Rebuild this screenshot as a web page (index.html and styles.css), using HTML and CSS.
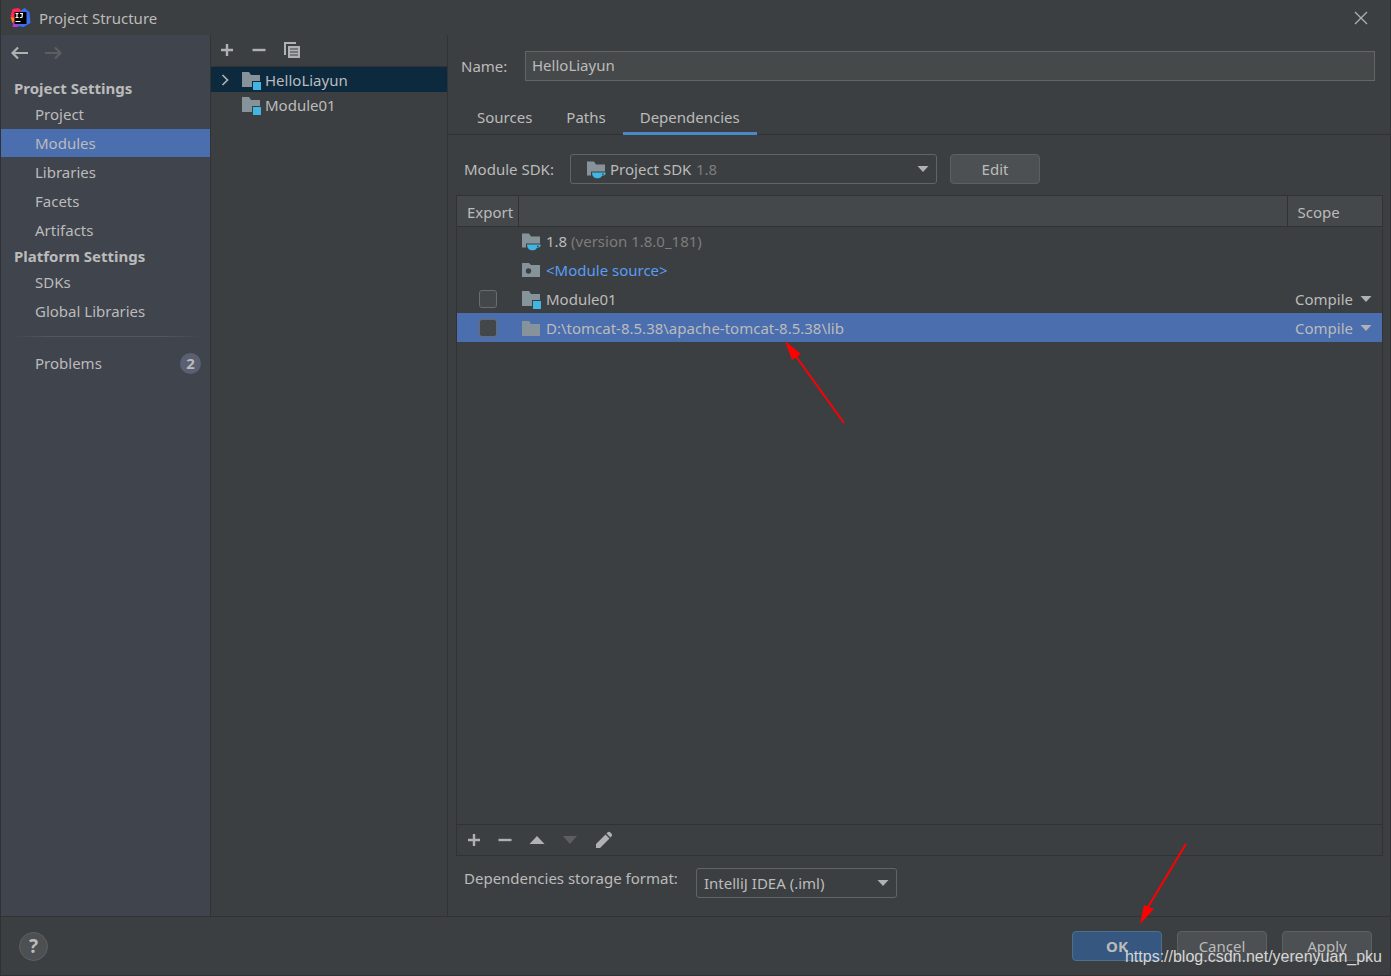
FILE: index.html
```
<!DOCTYPE html>
<html lang="en">
<head>
<meta charset="utf-8">
<title>Project Structure</title>
<link rel="stylesheet" href="styles.css">
</head>
<body>
<svg class="defs" aria-hidden="true">
  <symbol id="folder" viewBox="0 0 20 20"><path d="M1 3h7l2 3h9v12H1z" fill="#87939a"/></symbol>
  <symbol id="module" viewBox="0 0 20 20"><path d="M1 2h7l2 3h9v6h-8v6H1z" fill="#87939a"/><path d="M12 12h8v8h-8z" fill="#40b6e0"/></symbol>
  <symbol id="jdk" viewBox="0 0 20 20"><path d="M1 2.500h7l2 3h9v7H5v4H1z" fill="#87939a"/><path d="M6 13.500h13.500q1 2.800-3.500 3.300-1 2-3 2.500h-3Q6 18 6 13.500z" fill="#40b6e0"/><path d="M16 14.800h2.300q0 .8-2.300 1.100z" fill="#3c3f41"/></symbol>
  <symbol id="source" viewBox="0 0 20 20"><path d="M1 3h7l2 2h9v12H1z" fill="#87939a"/><circle cx="7.500" cy="11" r="2.700" fill="#3c3f41"/></symbol>
  <symbol id="plus" viewBox="0 0 14 14"><path d="M7 1v12M1 7h12" stroke="#afb1b3" stroke-width="2.400"/></symbol>
  <symbol id="minus" viewBox="0 0 14 14"><path d="M.5 7h13" stroke="#afb1b3" stroke-width="2.400"/></symbol>
  <symbol id="down" viewBox="0 0 12 8"><path d="M.5 1h11L6 7z" fill="currentColor"/></symbol>
</svg>

<div class="dialog">
  <header class="titlebar">
    <svg class="logo" viewBox="0 0 20 20" aria-hidden="true">
      <path d="M2 1l6-1 4 4-2 9H4L0 8z" fill="#fe2857"/>
      <path d="M0 9l5 1 1 4-4 1z" fill="#fc801d"/>
      <path d="M3 13l4 1 1 5H2z" fill="#af3bd1"/>
      <path d="M10 3l4-3 5 4 1 11-7 4-6-1z" fill="#3b6ff0"/>
      <path d="M4 4h12v12H4z" fill="#000"/>
      <path d="M5 5.500h3M6.500 5.500v4M5 9.500h3M9.500 5.500h3M11.700 5.500v3q0 1-1 1H9.300M5 13.500h5" stroke="#fff" stroke-width="1.200" fill="none"/>
    </svg>
    <h1 class="title">Project Structure</h1>
    <button class="icon-btn close" aria-label="Close"><svg width="14" height="14" viewBox="0 0 14 14"><path d="M1 1l12 12M13 1L1 13" stroke="#afb1b3" stroke-width="1.300"/></svg></button>
  </header>

  <div class="body">
    <nav class="sidebar" aria-label="Settings">
      <div class="history">
        <button class="icon-btn" aria-label="Back"><svg width="18" height="14" viewBox="0 0 18 14"><path d="M17 7H2M7 1.500L1.500 7 7 12.500" stroke="#afb1b3" stroke-width="2.200" fill="none"/></svg></button>
        <button class="icon-btn" aria-label="Forward" disabled><svg width="18" height="14" viewBox="0 0 18 14"><path d="M1 7h15M11 1.500L16.500 7 11 12.500" stroke="#5c5e5f" stroke-width="2.200" fill="none"/></svg></button>
      </div>
      <h2 class="group">Project Settings</h2>
      <ul class="items">
        <li><a class="item" href="#">Project</a></li>
        <li><a class="item selected" href="#" aria-current="page">Modules</a></li>
        <li><a class="item" href="#">Libraries</a></li>
        <li><a class="item" href="#">Facets</a></li>
        <li><a class="item" href="#">Artifacts</a></li>
      </ul>
      <h2 class="group">Platform Settings</h2>
      <ul class="items">
        <li><a class="item" href="#">SDKs</a></li>
        <li><a class="item" href="#">Global Libraries</a></li>
      </ul>
      <hr class="divider">
      <a class="item problems" href="#">Problems<span class="badge">2</span></a>
    </nav>

    <section class="modules" aria-label="Modules">
      <div class="toolbar">
        <button class="icon-btn" aria-label="Add"><svg width="14" height="14"><use href="#plus"/></svg></button>
        <button class="icon-btn" aria-label="Remove"><svg width="14" height="14"><use href="#minus"/></svg></button>
        <button class="icon-btn" aria-label="Copy"><svg width="16" height="16" viewBox="0 0 16 16"><path d="M1 13V1h11" stroke="#afb1b3" stroke-width="2" fill="none"/><path d="M4 4h12v12H4z" fill="#afb1b3"/><path d="M6 7h8M6 10h8M6 13h8" stroke="#3c3f41" stroke-width="1.200"/></svg></button>
      </div>
      <ul class="tree">
        <li class="node active"><svg class="chevron" viewBox="0 0 8 12"><path d="M1.500 1l5 5-5 5" stroke="#afb1b3" stroke-width="1.700" fill="none"/></svg><svg class="icon"><use href="#module"/></svg>HelloLiayun</li>
        <li class="node"><span class="chevron"></span><svg class="icon"><use href="#module"/></svg>Module01</li>
      </ul>
    </section>

    <main class="editor">
      <div class="name-row">
        <label class="name-label" for="name">Name:</label>
        <input class="name" id="name" type="text" value="HelloLiayun">
      </div>
      <div class="tabs" role="tablist">
        <button class="tab" role="tab">Sources</button>
        <button class="tab" role="tab">Paths</button>
        <button class="tab current" role="tab" aria-selected="true">Dependencies</button>
      </div>
      <div class="content">
        <div class="sdk-row">
          <label class="sdk-label" for="sdk">Module SDK:</label>
          <div class="combo sdk">
            <svg class="icon"><use href="#jdk"/></svg>
            <select class="select" id="sdk"><option>Project SDK</option></select>
            <span class="muted">1.8</span>
            <svg class="arrow"><use href="#down"/></svg>
          </div>
          <button class="btn">Edit</button>
        </div>

        <div class="panel">
          <table class="deps">
            <thead>
              <tr><th class="col-export">Export</th><th></th><th class="col-scope">Scope</th></tr>
            </thead>
            <tbody>
              <tr><td></td><td><div class="cell"><svg class="icon"><use href="#jdk"/></svg><span>1.8 <span class="muted">(version 1.8.0_181)</span></span></div></td><td></td></tr>
              <tr><td></td><td><div class="cell source"><svg class="icon"><use href="#source"/></svg>&lt;Module source&gt;</div></td><td></td></tr>
              <tr>
                <td class="check"><input class="box" type="checkbox" aria-label="Export Module01"></td>
                <td><div class="cell"><svg class="icon"><use href="#module"/></svg>Module01</div></td>
                <td><div class="scope"><select class="select" aria-label="Scope of Module01"><option>Compile</option></select><svg class="arrow"><use href="#down"/></svg></div></td>
              </tr>
              <tr class="picked">
                <td class="check"><input class="box" type="checkbox" aria-label="Export lib"></td>
                <td><div class="cell"><svg class="icon"><use href="#folder"/></svg>D:\tomcat-8.5.38\apache-tomcat-8.5.38\lib</div></td>
                <td><div class="scope"><select class="select" aria-label="Scope of lib"><option>Compile</option></select><svg class="arrow"><use href="#down"/></svg></div></td>
              </tr>
            </tbody>
          </table>
          <div class="actions">
            <button class="icon-btn" aria-label="Add dependency"><svg width="14" height="14"><use href="#plus"/></svg></button>
            <button class="icon-btn" aria-label="Remove dependency"><svg width="14" height="14"><use href="#minus"/></svg></button>
            <button class="icon-btn" aria-label="Move up"><svg width="16" height="10" viewBox="0 0 16 10"><path d="M.5 9L8 1l7.500 8z" fill="#afb1b3"/></svg></button>
            <button class="icon-btn" aria-label="Move down" disabled><svg width="16" height="10" viewBox="0 0 16 10"><path d="M1 1h14L8 9z" fill="#5c5e5f"/></svg></button>
            <button class="icon-btn" aria-label="Edit dependency"><svg width="18" height="18" viewBox="0 0 18 18"><path d="M1 17v-4L10.500 3.500l4 4L5 17zM11.500 2.500l1.200-1.200q1.300-1 2.700.2l1.200 1.200q1 1.300 0 2.600l-1.200 1.200z" fill="#afb1b3"/></svg></button>
          </div>
        </div>

        <div class="storage-row">
          <label class="storage-label" for="storage">Dependencies storage format:</label>
          <div class="combo storage">
            <select class="select" id="storage"><option>IntelliJ IDEA (.iml)</option></select>
            <svg class="arrow"><use href="#down"/></svg>
          </div>
        </div>
      </div>
    </main>
  </div>

  <footer class="footer">
    <button class="help" aria-label="Help">?</button>
    <button class="btn primary">OK</button>
    <button class="btn">Cancel</button>
    <button class="btn">Apply</button>
  </footer>

  <svg class="pointer to-row" viewBox="0 0 60 84" aria-hidden="true"><path d="M59 82L10 14" stroke="#f00" stroke-width="2"/><path d="M0 0l16 13-9 6z" fill="#f00"/></svg>
  <svg class="pointer to-ok" viewBox="0 0 48 82" aria-hidden="true"><path d="M47 1L9 64" stroke="#f00" stroke-width="2"/><path d="M1 81L5 62l10 4z" fill="#f00"/></svg>
  <div class="watermark">https://blog.csdn.net/yerenyuan_pku</div>
</div>
</body>
</html>
```
FILE: styles.css
```
* { box-sizing: border-box; }
body {
  margin: 0;
  background: #3c3f41;
  color: #bbbbbb;
  font: 15px/20px "Noto Sans", "Open Sans", sans-serif;
}
button, input, select { font: inherit; color: inherit; }
ul { list-style: none; margin: 0; padding: 0; }
.defs { display: none; }
svg { flex: none; display: block; }

.dialog {
  position: relative;
  display: flex;
  flex-direction: column;
  min-height: 100vh;
  border: solid #2f3132;
  border-width: 0 1px 1px;
  overflow: hidden;
}
.icon-btn {
  display: flex;
  padding: 0;
  border: 0;
  background: none;
}
.icon { width: 20px; height: 20px; }
.muted { color: #7c7c7c; }

.titlebar {
  display: flex;
  align-items: center;
  gap: 8px;
  height: 35px;
  padding: 0 22px 0 9px;
}
.logo { width: 21px; height: 20px; }
.title { margin: 0; font-size: 15px; font-weight: 400; }
.close { margin-left: auto; }

.body { display: flex; flex: 1; }
.sidebar {
  width: 210px;
  background: #40444d;
  border-right: 1px solid #323232;
}
.history { display: flex; gap: 15px; padding: 11px 10px 16px; }
.group {
  margin: 0;
  padding: 0 13px;
  font-size: 15px;
  line-height: 24px;
  font-weight: 700;
}
.items { display: grid; gap: 1px; }
.item {
  display: flex;
  align-items: center;
  height: 28px;
  padding: 0 9px 0 34px;
  color: inherit;
  text-decoration: none;
}
.item.selected { background: #4b6eaf; }
.divider {
  height: 1px;
  margin: 11px 9px 12px;
  border: 0;
  background: linear-gradient(90deg, transparent, #555759 20%, #555759 80%, transparent);
}
.problems { justify-content: space-between; }
.badge {
  width: 21px;
  border-radius: 11px;
  background: #5a5f72;
  font-weight: 700;
  line-height: 21px;
  text-align: center;
}

.modules { width: 237px; border-right: 1px solid #323232; }
.toolbar {
  display: flex;
  align-items: center;
  gap: 18px;
  height: 32px;
  padding: 0 9px 2px;
  border-bottom: 1px solid #323232;
}
.node {
  display: flex;
  align-items: center;
  gap: 4px;
  height: 25px;
  padding-left: 10px;
}
.node.active { background: #0d293e; }
.chevron { width: 8px; height: 12px; margin-right: 8px; }

.editor { display: flex; flex: 1; flex-direction: column; min-width: 0; }
.name-row {
  display: flex;
  align-items: center;
  padding: 16px 15px 20px 13px;
}
.name-label { width: 64px; }
.name {
  flex: 1;
  min-width: 0;
  height: 30px;
  padding: 0 6px 2px;
  border: 1px solid #646464;
  background: #45494a;
}
.tabs { display: flex; padding-left: 12px; border-bottom: 1px solid #323232; }
.tab {
  height: 34px;
  margin-bottom: -1px;
  padding: 0 17px;
  border: 0;
  border-bottom: 3px solid transparent;
  background: none;
}
.tab.current { border-color: #4a88c7; }

.content {
  display: flex;
  flex: 1;
  flex-direction: column;
  padding: 19px 7px 18px 8px;
}
.sdk-row { display: flex; align-items: center; padding: 0 8px 11px; }
.sdk-label { width: 106px; }
.combo {
  display: flex;
  align-items: center;
  gap: 4px;
  height: 30px;
  padding: 0 7px;
  border: 1px solid #646464;
  border-radius: 3px;
}
.sdk { width: 367px; margin-right: 13px; padding-left: 15px; }
.storage { width: 201px; }
.select {
  padding: 0;
  border: 0;
  appearance: none;
  background: none;
}
.arrow { width: 12px; height: 8px; margin-left: auto; color: #afb1b3; }
.btn {
  width: 90px;
  height: 30px;
  padding: 0;
  border: 1px solid #5e6060;
  border-radius: 4px;
  background: #4c5052;
}
.primary { border-color: #4c708c; background: #365880; font-weight: 700; }

.panel {
  display: flex;
  flex: 1;
  flex-direction: column;
  border: 1px solid #323232;
}
.deps { width: 100%; border-collapse: collapse; table-layout: fixed; }
.deps th {
  height: 30px;
  padding: 2px 0 0 10px;
  border-bottom: 1px solid #323232;
  background: #45484a;
  font-weight: 400;
  text-align: left;
}
.deps th + th { border-left: 1px solid #323232; }
.deps .col-export { width: 61px; }
.deps .col-scope { width: 95px; }
.deps td { height: 29px; padding: 0; }
.cell { display: flex; align-items: center; gap: 5px; padding-left: 3px; }
.source { color: #589df6; }
.picked { background: #4b6eaf; }
.check { line-height: 0; text-align: center; }
.box {
  width: 18px;
  height: 18px;
  margin: 0;
  border: 1px solid #6b6b6b;
  border-radius: 3px;
  appearance: none;
  background: #43474a;
}
.scope { display: flex; align-items: center; padding: 0 10px 0 8px; }
.actions {
  display: flex;
  align-items: center;
  gap: 17px;
  height: 31px;
  margin-top: auto;
  padding: 0 10px;
  border-top: 1px solid #323232;
}
.storage-row {
  display: flex;
  align-items: flex-start;
  padding: 12px 8px 0;
}
.storage-label { width: 232px; }

.footer {
  display: flex;
  align-items: center;
  gap: 15px;
  height: 59px;
  padding: 0 18px;
  border-top: 1px solid #323232;
}
.help {
  width: 29px;
  height: 29px;
  margin-right: auto;
  padding: 0;
  border: 1px solid #5e6060;
  border-radius: 50%;
  background: #4c5052;
  font-size: 19px;
  font-weight: 700;
}

.pointer { position: absolute; }
.to-row { left: 784px; top: 341px; width: 60px; height: 84px; }
.to-ok { right: 203px; bottom: 50px; width: 48px; height: 82px; }
.watermark {
  position: absolute;
  right: 8px;
  bottom: 8px;
  color: #d6d6d6;
  font: 16px/20px "Liberation Sans", sans-serif;
}
```
